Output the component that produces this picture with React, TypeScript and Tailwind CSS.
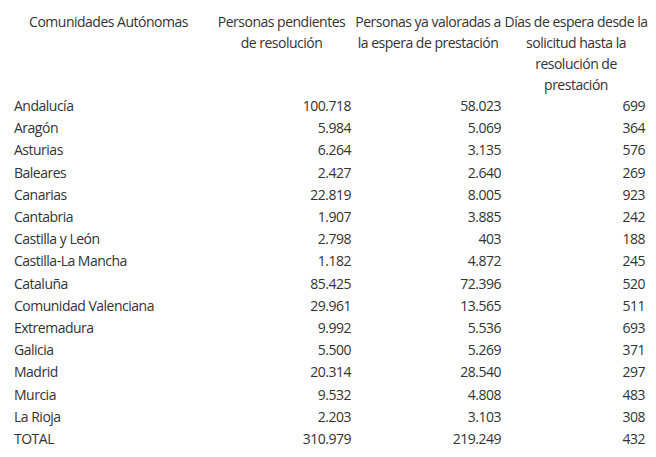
const rows: [string, string, string, string][] = [
  ["Andalucía", "100.718", "58.023", "699"],
  ["Aragón", "5.984", "5.069", "364"],
  ["Asturias", "6.264", "3.135", "576"],
  ["Baleares", "2.427", "2.640", "269"],
  ["Canarias", "22.819", "8.005", "923"],
  ["Cantabria", "1.907", "3.885", "242"],
  ["Castilla y León", "2.798", "403", "188"],
  ["Castilla-La Mancha", "1.182", "4.872", "245"],
  ["Cataluña", "85.425", "72.396", "520"],
  ["Comunidad Valenciana", "29.961", "13.565", "511"],
  ["Extremadura", "9.992", "5.536", "693"],
  ["Galicia", "5.500", "5.269", "371"],
  ["Madrid", "20.314", "28.540", "297"],
  ["Murcia", "9.532", "4.808", "483"],
  ["La Rioja", "2.203", "3.103", "308"],
  ["TOTAL", "310.979", "219.249", "432"],
];

export default function App() {
  return (
    <div className="bg-white w-[656px] h-[457px] pl-[7px] pt-[11px] text-[#333] text-[14px] tracking-[-0.5px] font-['Open_Sans',sans-serif]">
      <table className="table-fixed w-[642px] border-collapse">
        <colgroup>
          <col className="w-[203px]" />
          <col className="w-[143px]" />
          <col className="w-[150px]" />
          <col className="w-[146px]" />
        </colgroup>
        <thead>
          <tr className="align-top leading-[21px]">
            <th className="font-normal text-center">Comunidades Autónomas</th>
            <th className="font-normal text-center">Personas pendientes de resolución</th>
            <th className="font-normal text-center">Personas ya valoradas a la espera de prestación</th>
            <th className="font-normal text-center">Días de espera desde la solicitud hasta la resolución de prestación</th>
          </tr>
        </thead>
        <tbody>
          {rows.map((r) => (
            <tr key={r[0]} className="leading-[22.2px]">
              <td className="pl-[7px]">{r[0]}</td>
              <td className="text-right pr-[2px]">{r[1]}</td>
              <td className="text-right pr-[2px]">{r[2]}</td>
              <td className="text-right pr-[4px]">{r[3]}</td>
            </tr>
          ))}
        </tbody>
      </table>
    </div>
  );
}
